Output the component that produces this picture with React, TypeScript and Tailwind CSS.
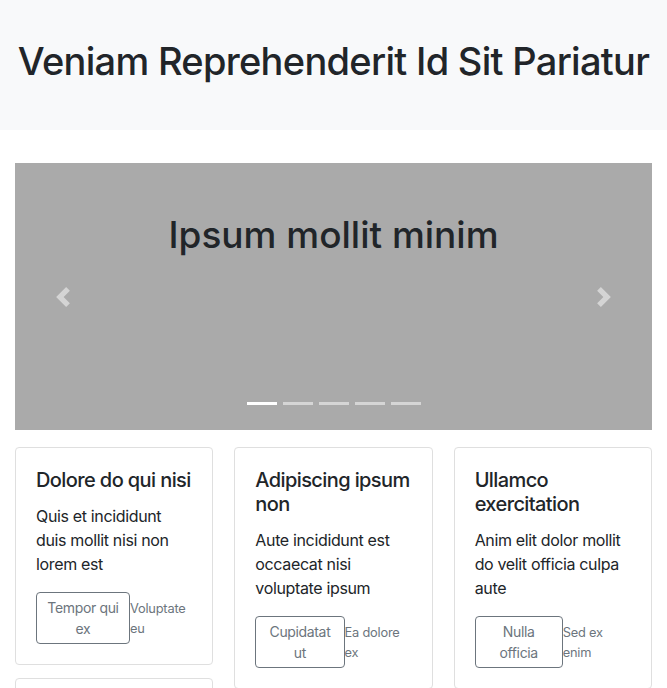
import React from "react";

const cards = [
  { title: "Dolore do qui nisi", text: "Quis et incididunt duis mollit nisi non lorem est", btn: "Tempor qui ex", small: "Voluptate eu" },
  { title: "Adipiscing ipsum non", text: "Aute incididunt est occaecat nisi voluptate ipsum", btn: "Cupidatat ut", small: "Ea dolore ex" },
  { title: "Ullamco exercitation", text: "Anim elit dolor mollit do velit officia culpa aute", btn: "Nulla officia", small: "Sed ex enim" },
  { title: "Magna sint labore", text: "Esse dolor cillum nostrud amet", btn: "Irure elit", small: "Duis ad" },
];

type Card = (typeof cards)[number];

function InfoCard({ card }: { card: Card }) {
  return (
    <div className="border border-[#dfdfdf] rounded-[4px] bg-white p-5">
      <h5 className="text-[20px] leading-[24px] font-medium text-[#212529] mb-3 tracking-[-0.6px]">{card.title}</h5>
      <p className="text-[16px] leading-[24px] text-[#212529] mb-4 tracking-[-0.35px]">{card.text}</p>
      <div className="flex items-start">
        <button className="shrink border border-[#6c757d] rounded-[4px] px-2 py-1 text-[14px] leading-[21px] text-[#6c757d] bg-white text-center tracking-[-0.35px]">
          {card.btn}
        </button>
        <small className="text-[12.8px] leading-[20px] text-[#6c757d] pt-[7px] tracking-[-0.2px]">{card.small}</small>
      </div>
    </div>
  );
}

function Chevron({ dir }: { dir: "left" | "right" }) {
  return (
    <svg width="20" height="20" viewBox="0 0 8 8" className="opacity-50">
      <path
        fill="#fff"
        d={dir === "left" ? "M5.25 0l-4 4 4 4 1.5-1.5L4.25 4l2.5-2.5L5.25 0z" : "M2.75 0l-1.5 1.5L3.75 4l-2.5 2.5L2.75 8l4-4-4-4z"}
      />
    </svg>
  );
}

export default function App() {
  const cols = [[cards[0], cards[3]], [cards[1]], [cards[2]]];
  return (
    <div className="min-h-[688px] bg-white" style={{ fontFamily: "Inter, 'Noto Sans', sans-serif" }}>
      {/* header */}
      <div className="bg-[#f8f9fa] h-[130px] flex items-center justify-center pb-[8px] mb-[33px]">
        <h1 className="text-[38px] leading-[46px] font-medium text-[#212529] tracking-[-0.7px]">Veniam Reprehenderit Id Sit Pariatur</h1>
      </div>

      <div className="px-[15px]">
        {/* carousel */}
        <div className="relative h-[267px] bg-[#aaaaaa] mb-[17px]">
          <h2 className="absolute inset-x-0 top-[48px] text-center text-[37px] leading-[48px] font-medium text-[#212529]">
            Ipsum mollit minim
          </h2>
          <div className="absolute left-0 top-0 bottom-0 w-[15%] flex items-center justify-center">
            <Chevron dir="left" />
          </div>
          <div className="absolute right-0 top-0 bottom-0 w-[15%] flex items-center justify-center">
            <Chevron dir="right" />
          </div>
          <div className="absolute inset-x-0 bottom-[25px] flex justify-center gap-[6px]">
            {[0, 1, 2, 3, 4].map((i) => (
              <span key={i} className={i === 0 ? "w-[30px] h-[3px] bg-white" : "w-[30px] h-[3px] bg-white/50"} />
            ))}
          </div>
        </div>

        {/* cards */}
        <div className="grid grid-cols-3 gap-x-[21px]">
          {cols.map((col, ci) => (
            <div key={ci} className="flex flex-col gap-[13px]">
              {col.map((c) => (
                <InfoCard key={c.title} card={c} />
              ))}
            </div>
          ))}
        </div>
      </div>
    </div>
  );
}
